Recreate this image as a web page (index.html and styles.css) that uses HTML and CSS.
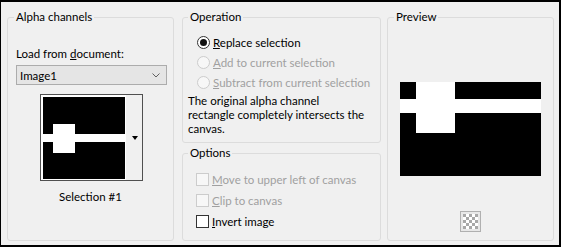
FILE: index.html
```html
<!DOCTYPE html>
<html lang="en">
<head>
    <meta charset="UTF-8">
    <title>Load Selection From Alpha Channel</title>
    <link rel="stylesheet" href="styles.css">
</head>
<body>
	<div class="dialog">

		<fieldset class="group group-alpha">
			<legend>Alpha channels</legend>
			<div class="field-label">Load from <u>d</u>ocument:</div>
			<div class="select">
				<span>Image1</span>
				<svg class="chevron" width="8" height="5" viewBox="0 0 8 5">
					<polyline points="0.5,0.5 4,4 7.5,0.5" fill="none" stroke="#606060" stroke-width="1"/>
				</svg>
			</div>
			<div class="thumb">
				<svg class="thumb-img" width="82" height="82" viewBox="0 0 82 82">
					<rect width="82" height="82" fill="#000"/>
					<rect x="0" y="37" width="82" height="8" fill="#fff"/>
					<rect x="10" y="27" width="22" height="29" fill="#fff"/>
				</svg>
				<div class="thumb-btn"><span class="arrow"></span></div>
			</div>
			<div class="thumb-caption">Selection #1</div>
		</fieldset>

		<div class="col-mid">
			<fieldset class="group group-op">
				<legend>Operation</legend>
				<div class="choice"><span class="radio checked"></span><span><u>R</u>eplace selection</span></div>
				<div class="choice disabled"><span class="radio"></span><span><u>A</u>dd to current selection</span></div>
				<div class="choice disabled"><span class="radio"></span><span><u>S</u>ubtract from current selection</span></div>
				<p class="note">The original alpha channel<br>rectangle completely intersects the<br>canvas.</p>
			</fieldset>

			<fieldset class="group group-opt">
				<legend>Options</legend>
				<div class="check-row disabled"><span class="checkbox"></span><span><u>M</u>ove to upper left of canvas</span></div>
				<div class="check-row disabled"><span class="checkbox"></span><span><u>C</u>lip to canvas</span></div>
				<div class="check-row"><span class="checkbox"></span><span><u>I</u>nvert image</span></div>
			</fieldset>
		</div>

		<fieldset class="group group-preview">
			<legend>Preview</legend>
			<svg class="preview-img" width="141" height="94" viewBox="0 0 141 94">
				<rect width="141" height="94" fill="#000"/>
				<rect x="0" y="17" width="141" height="14" fill="#fff"/>
				<rect x="16" y="0" width="39" height="51" fill="#fff"/>
			</svg>
			<svg class="checker" width="21" height="21" viewBox="0 0 21 21">
				<defs>
					<pattern id="chk" width="6" height="6" patternUnits="userSpaceOnUse" x="3" y="3">
						<rect width="6" height="6" fill="#fff"/>
						<rect width="3" height="3" fill="#a8a8a8"/>
						<rect x="3" y="3" width="3" height="3" fill="#a8a8a8"/>
					</pattern>
				</defs>
				<rect x="0.5" y="0.5" width="20" height="20" fill="#e8e8e8" stroke="#b0b0b0"/>
				<rect x="3" y="3" width="15" height="15" fill="url(#chk)"/>
			</svg>
		</fieldset>

	</div>
</body>
</html>
```

FILE: styles.css
```css
html, body {
	margin: 0;
	padding: 0;
	background: #000;
}

body {
	font-family: Lato, "Noto Sans", sans-serif;
	font-size: 11.5px;
	color: #000;
}

.dialog {
	width: 561px;
	height: 247px;
	box-sizing: border-box;
	border-style: solid;
	border-color: #000;
	border-width: 2px 2px 2px 1px;
	padding: 8px 0 4px 6px;
	background: #f0f0f0;
	display: flex;
}

/* group boxes */
.group {
	margin: 0;
	min-width: 0;
	box-sizing: border-box;
	border: 1px solid #dcdcdc;
	border-radius: 3px;
	padding: 0 5px;
}

.group legend {
	padding: 0 2px;
	line-height: 14px;
}

.group-alpha {
	width: 167px;
	padding-left: 8px;
	padding-right: 6px;
}
.group-alpha legend {
	margin-left: -2px;
}

.col-mid {
	width: 199px;
	margin-left: 8px;
	display: flex;
	flex-direction: column;
}

.group-op {
	height: 133px;
}

.group-opt {
	flex: 1;
	margin-top: 3px;
}

.group-preview {
	width: 167px;
	margin-left: 6px;
	text-align: center;
}
.group-preview legend {
	margin-left: 1px;
	text-align: left;
}

/* alpha channels */
.field-label {
	margin-top: 23px;
	line-height: 14px;
}

.select {
	margin-top: 4px;
	height: 20px;
	width: 151px;
	box-sizing: border-box;
	border: 1px solid #acacac;
	background: #e5e5e5;
	display: flex;
	align-items: center;
	justify-content: space-between;
	padding: 0 6px 0 3px;
}

.chevron {
	display: block;
}

.thumb {
	margin: 9px 0 0 24px;
	width: 103px;
	height: 87px;
	box-sizing: border-box;
	border: 1px solid #505050;
	background: #fff;
	padding: 2px 0 1px 2px;
	display: flex;
}

.thumb-img {
	display: block;
}

.thumb-btn {
	flex: 1;
	background: #f0f0f0;
	border-left: 1px solid #fff;
	margin-top: -2px;
	margin-bottom: -1px;
	display: flex;
	align-items: center;
	justify-content: center;
}

.arrow {
	width: 0;
	height: 0;
	border-left: 3.5px solid transparent;
	border-right: 3.5px solid transparent;
	border-top: 4px solid #000;
	margin-left: 1px;
}

.thumb-caption {
	margin-top: 9px;
	line-height: 14px;
	text-align: center;
	padding-right: 2px;
}

/* operation */
.choice {
	height: 20px;
	display: flex;
	align-items: center;
	margin-left: 9px;
	white-space: nowrap;
}
.choice:first-of-type {
	margin-top: 8px;
}

.radio {
	width: 13px;
	height: 13px;
	flex: none;
	box-sizing: border-box;
	border: 1px solid #333;
	border-radius: 50%;
	background: #fff;
	margin-right: 3px;
	display: flex;
	align-items: center;
	justify-content: center;
}
.radio.checked::after {
	content: "";
	width: 7px;
	height: 7px;
	border-radius: 50%;
	background: #111;
}

.disabled {
	color: #a0a0a0;
}
.disabled .radio,
.disabled .checkbox {
	border-color: #cccccc;
	background: #f7f7f7;
}

.note {
	margin: 2px 0 0 0;
	line-height: 14px;
}

/* options */
.check-row {
	height: 21px;
	display: flex;
	align-items: center;
	margin-left: 8px;
	white-space: nowrap;
}
.check-row:first-of-type {
	margin-top: 9px;
}

.checkbox {
	width: 13px;
	height: 13px;
	flex: none;
	box-sizing: border-box;
	border: 1px solid #333;
	background: #fff;
	margin-right: 3px;
}

/* preview */
.preview-img {
	display: block;
	margin: 58px auto 0;
}

.checker {
	display: block;
	margin: 35px auto 0;
}
```
